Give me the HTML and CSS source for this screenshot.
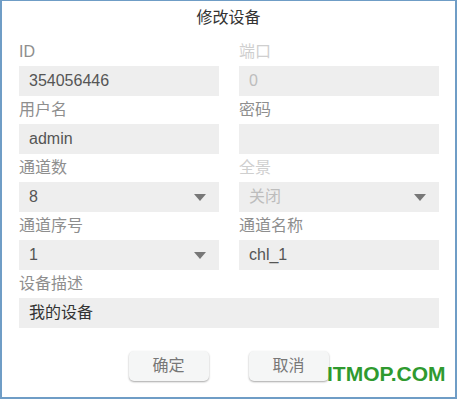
FILE: index.html
```html
<!DOCTYPE html>
<html>
<head>
<meta charset="utf-8">
<link rel="stylesheet" href="styles.css">
</head>
<body>
<div class="dialog">
  <div class="title">修改设备</div>
  <div class="form">
    <div class="field">
      <div class="label">ID</div>
      <div class="input">354056446</div>
    </div>
    <div class="field disabled">
      <div class="label">端口</div>
      <div class="input">0</div>
    </div>
    <div class="field">
      <div class="label">用户名</div>
      <div class="input">admin</div>
    </div>
    <div class="field">
      <div class="label">密码</div>
      <div class="input"></div>
    </div>
    <div class="field">
      <div class="label">通道数</div>
      <div class="input select">8<span class="arrow"></span></div>
    </div>
    <div class="field disabled">
      <div class="label">全景</div>
      <div class="input select">关闭<span class="arrow"></span></div>
    </div>
    <div class="field">
      <div class="label">通道序号</div>
      <div class="input select">1<span class="arrow"></span></div>
    </div>
    <div class="field">
      <div class="label">通道名称</div>
      <div class="input">chl_1</div>
    </div>
    <div class="field wide">
      <div class="label">设备描述</div>
      <div class="input dark">我的设备</div>
    </div>
  </div>
  <div class="buttons">
    <div class="btn">确定</div>
    <div class="btn">取消</div>
  </div>
  <div class="watermark">ITMOP.COM</div>
</div>
</body>
</html>
```
FILE: styles.css
```css
html, body {
  margin: 0;
  padding: 0;
  background: #ffffff;
}
body {
  font-family: "Liberation Sans", "Noto Sans CJK SC", sans-serif;
}
.dialog {
  position: relative;
  box-sizing: border-box;
  width: 457px;
  height: 399px;
  border-top: 1px solid #6f9dc6;
  border-left: 2px solid #6f9dc6;
  border-right: 2px solid #6f9dc6;
  border-bottom: 2px solid #6f9dc6;
  background: #fff;
}
.title {
  height: 37px;
  line-height: 34px;
  text-align: center;
  font-size: 16px;
  color: #333;
}
.form {
  display: grid;
  grid-template-columns: 200px 200px;
  column-gap: 20px;
  padding-left: 17px;
}
.field.wide {
  grid-column: 1 / 3;
}
.label {
  height: 28px;
  line-height: 28px;
  font-size: 16px;
  color: #8e8e8e;
}
.input {
  position: relative;
  height: 30px;
  line-height: 30px;
  background: #eeeeee;
  padding-left: 10px;
  font-size: 16px;
  color: #555;
}
.input.dark {
  color: #333;
}
.disabled .label {
  color: #cfcfcf;
}
.disabled .input {
  color: #bdbdbd;
}
.arrow {
  position: absolute;
  right: 13px;
  top: 12px;
  width: 0;
  height: 0;
  border-left: 6px solid transparent;
  border-right: 6px solid transparent;
  border-top: 7px solid #777;
}
.buttons {
  display: flex;
  justify-content: center;
  gap: 40px;
  margin-top: 23px;
  padding-left: 0;
}
.btn {
  width: 80px;
  height: 30px;
  line-height: 29px;
  text-align: center;
  font-size: 16px;
  color: #777;
  background: #f5f6f6;
  border-radius: 5px;
  box-shadow: 0 1px 2px rgba(0, 0, 0, 0.35);
}
.watermark {
  position: absolute;
  left: 325px;
  top: 359px;
  font-family: "Liberation Sans", sans-serif;
  font-weight: bold;
  font-size: 21px;
  line-height: 28px;
  color: #2f9a2f;
}
```
